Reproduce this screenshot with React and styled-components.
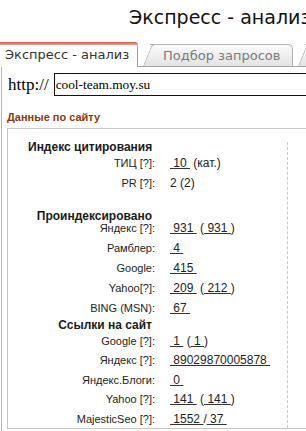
import styled, { createGlobalStyle } from 'styled-components'

const Global = createGlobalStyle`
  html, body {
    margin: 0;
    padding: 0;
    background: #fff;
    overflow: hidden;
  }
  body {
    font-family: "Liberation Sans", Arial, sans-serif;
    color: #222;
  }
`

const Page = styled.div`
  width: 306px;
  height: 431px;
  overflow: hidden;
`

const Title = styled.h1`
  margin: 0;
  height: 34px;
  line-height: 34px;
  padding-left: 129px;
  font-family: "DejaVu Sans", Verdana, sans-serif;
  font-weight: normal;
  font-size: 19px;
  color: #111;
  white-space: nowrap;
`

const TabBar = styled.div`
  display: flex;
  align-items: flex-end;
  height: 24px;
  margin-top: 8px;
  border-bottom: 1px solid #a4a4a4;
  white-space: nowrap;
`

const ActiveTab = styled.div`
  position: relative;
  z-index: 2;
  flex-shrink: 0;
  box-sizing: border-box;
  width: 138px;
  height: 25px;
  margin-bottom: -1px;
  padding: 3px 0 0 5px;
  line-height: 20px;
  background: #fff;
  border-right: 1px solid #9c9c9c;
  border-top-right-radius: 5px;
  font-family: "DejaVu Sans", Verdana, sans-serif;
  font-size: 13px;
  color: #333;

  &::before {
    content: "";
    position: absolute;
    left: 0;
    right: -1px;
    top: 0;
    height: 3px;
    border-top-right-radius: 5px;
    background: linear-gradient(#d8584f, #eea29c);
  }
`

const Tab = styled.div`
  position: relative;
  flex-shrink: 0;
  box-sizing: border-box;
  height: 22px;
  margin-left: ${(p) => p.$offset}px;
  padding: 0 12px 0 13px;
  line-height: 21px;
  background: linear-gradient(#fbfbfb, #e3e3e3);
  border-top: 1px solid #b2b2b2;
  border-right: 1px solid #b2b2b2;
  border-top-right-radius: 5px;
  font-family: "DejaVu Sans", Verdana, sans-serif;
  font-size: 13px;
  color: #7a7a7a;

  &::before {
    content: "";
    position: absolute;
    left: -7px;
    top: -1px;
    bottom: 0;
    width: 10px;
    background: linear-gradient(#fbfbfb, #e3e3e3);
    border-top: 1px solid #b2b2b2;
    border-left: 1px solid #b2b2b2;
    border-top-left-radius: 4px;
    transform: skewX(-22deg);
    transform-origin: bottom left;
  }

  span {
    position: relative;
  }
`

const Panel = styled.div`
  margin-left: 1px;
  border-left: 1px solid #b4b4b4;
  padding-top: 6px;
  height: 400px;
`

const UrlRow = styled.div`
  display: flex;
  align-items: center;
  padding-left: 6px;
`

const Scheme = styled.span`
  font-family: "Liberation Serif", "Times New Roman", serif;
  font-size: 17px;
  color: #000;
`

const UrlInput = styled.input`
  box-sizing: border-box;
  flex: 1;
  height: 23px;
  margin: 0 -20px 0 5px;
  padding: 0 1px;
  border: 1px solid #111;
  font-family: "Liberation Serif", "Times New Roman", serif;
  font-size: 13.33px;
  color: #000;
  outline: none;
`

const SectionTitle = styled.div`
  margin-top: 14px;
  padding-left: 5px;
  line-height: 14px;
  font-size: 11px;
  font-weight: bold;
  color: #8c3a0c;
`

const Box = styled.div`
  box-sizing: border-box;
  margin: 4px -10px 0 5px;
  height: 301px;
  padding-top: 13px;
  border: 1px solid #c6c6c6;
  border-right: none;
`

const Stats = styled.div`
  box-sizing: border-box;
  width: 260px;
  height: 286px;
  margin-left: 20px;
  border-right: 1px dashed #c8c8c8;
`

const Heading = styled.div`
  width: 124px;
  margin: ${(p) => p.$top}px 0 ${(p) => p.$bottom}px;
  line-height: 11px;
  text-align: right;
  font-size: 12px;
  font-weight: bold;
  color: #1a1a1a;
  white-space: nowrap;
`

const Row = styled.div`
  display: grid;
  grid-template-columns: 127px 1fr;
  column-gap: 15px;
  align-items: center;
  height: ${(p) => p.$h || 20}px;
  line-height: 12px;
  white-space: nowrap;
`

const Label = styled.span`
  text-align: right;
  font-size: 11px;
  color: #222;
`

const Value = styled.span`
  font-size: 12px;
  color: #222;
`

const Num = styled.span`
  text-decoration: underline;
  text-decoration-color: #333;
`

const N = ({ children }) => <Num>{'\u00a0' + children + '\u00a0'}</Num>

const Pair = ({ a, b }) => (
  <>
    <N>{a}</N> (<N>{b}</N>)
  </>
)

const App = () => {
  return (
    <Page>
      <Global />
      <Title>Экспресс - анализ</Title>
      <TabBar>
        <ActiveTab>Экспресс - анализ</ActiveTab>
        <Tab $offset={12}>
          <span>Подбор запросов</span>
        </Tab>
        <Tab $offset={12}>
          <span>Позиции</span>
        </Tab>
      </TabBar>
      <Panel>
        <UrlRow>
          <Scheme>http://</Scheme>
          <UrlInput defaultValue="cool-team.moy.su" />
        </UrlRow>
        <SectionTitle>Данные по сайту</SectionTitle>
        <Box>
          <Stats>
            <Heading $top={0} $bottom={0}>Индекс цитирования</Heading>
            <Row>
              <Label>ТИЦ [?]:</Label>
              <Value>
                <N>10</N> (кат.)
              </Value>
            </Row>
            <Row>
              <Label>PR [?]:</Label>
              <Value>2 (2)</Value>
            </Row>

            <Heading $top={18} $bottom={-4}>Проиндексировано</Heading>
            <Row>
              <Label>Яндекс [?]:</Label>
              <Value>
                <Pair a="931" b="931" />
              </Value>
            </Row>
            <Row>
              <Label>Рамблер:</Label>
              <Value>
                <N>4</N>
              </Value>
            </Row>
            <Row>
              <Label>Google:</Label>
              <Value>
                <N>415</N>
              </Value>
            </Row>
            <Row>
              <Label>Yahoo[?]:</Label>
              <Value>
                <Pair a="209" b="212" />
              </Value>
            </Row>
            <Row>
              <Label>BING (MSN):</Label>
              <Value>
                <N>67</N>
              </Value>
            </Row>

            <Heading $top={2} $bottom={0}>Ссылки на сайт</Heading>
            <Row $h={19.5}>
              <Label>Google [?]:</Label>
              <Value>
                <Pair a="1" b="1" />
              </Value>
            </Row>
            <Row $h={19.5}>
              <Label>Яндекс [?]:</Label>
              <Value>
                <N>89029870005878</N>
              </Value>
            </Row>
            <Row $h={19.5}>
              <Label>Яндекс.Блоги:</Label>
              <Value>
                <N>0</N>
              </Value>
            </Row>
            <Row $h={19.5}>
              <Label>Yahoo [?]:</Label>
              <Value>
                <Pair a="141" b="141" />
              </Value>
            </Row>
            <Row $h={19.5}>
              <Label>MajesticSeo [?]:</Label>
              <Value>
                <N>1552</N>/<N>37</N>
              </Value>
            </Row>
          </Stats>
        </Box>
      </Panel>
    </Page>
  )
}

export default App
